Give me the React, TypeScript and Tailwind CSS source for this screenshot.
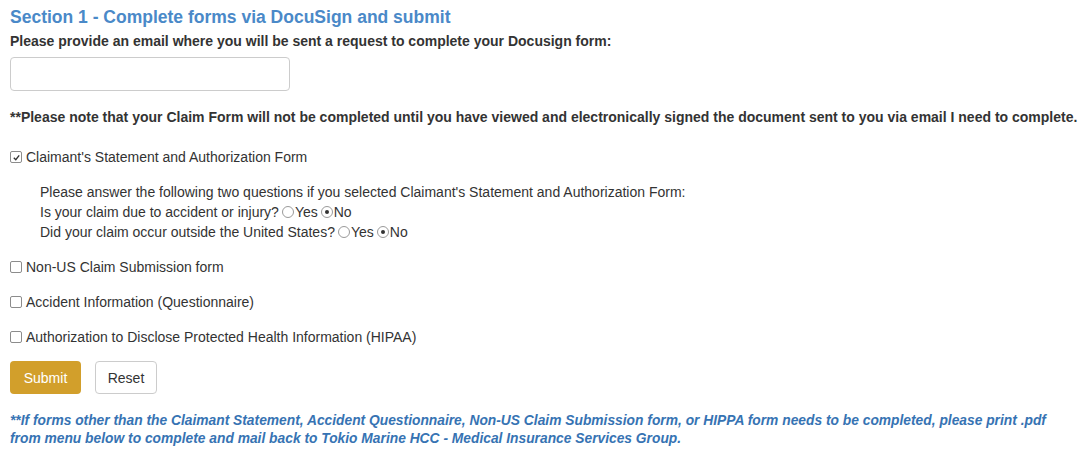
import React from 'react';

const Check: React.FC<{ checked?: boolean }> = ({ checked }) => (
  <span className="inline-flex w-[12px] h-[12px] mr-[4px] border border-[#8c8c8c] rounded-[2px] bg-white items-center justify-center shrink-0">
    {checked && (
      <svg viewBox="0 0 10 10" className="w-[9px] h-[9px]">
        <path d="M2 5.2 L4.2 7.4 L8 2.6" fill="none" stroke="#333" strokeWidth="1.5" />
      </svg>
    )}
  </span>
);

const Radio: React.FC<{ checked?: boolean }> = ({ checked }) => (
  <span className="inline-flex w-[12px] h-[12px] ml-[3px] mr-[1px] border border-[#9a9a9a] rounded-full bg-white items-center justify-center shrink-0">
    {checked && <span className="w-[4px] h-[4px] rounded-full bg-[#333]" />}
  </span>
);

const Option: React.FC<{ label: string; checked?: boolean }> = ({ label, checked }) => (
  <label className="flex items-center h-[20px]">
    <Check checked={checked} />
    <span>{label}</span>
  </label>
);

export default function App() {
  return (
    <div className="bg-white px-[10px] pt-[5px] text-[14px] leading-[20px] text-[#333] font-['Liberation_Sans',Arial,sans-serif]">
      <h2 className="text-[17.5px] leading-[24px] text-[#4a89c8] font-semibold">
        Section 1 - Complete forms via DocuSign and submit
      </h2>
      <p className="font-bold mt-[2px]">
        Please provide an email where you will be sent a request to complete your Docusign form:
      </p>
      <input
        type="text"
        className="mt-[6px] block w-[280px] h-[34px] border border-[#cccccc] rounded-[4px] px-3 outline-none"
      />
      <p className="font-bold mt-[16px] whitespace-nowrap">
        **Please note that your Claim Form will not be completed until you have viewed and electronically signed the document sent to you via email I need to complete.
      </p>
      <div className="mt-[20px]">
        <Option label="Claimant's Statement and Authorization Form" checked />
      </div>
      <div className="pl-[30px] mt-[15px]">
        <p>Please answer the following two questions if you selected Claimant's Statement and Authorization Form:</p>
        <div className="flex items-center">
          <span>Is your claim due to accident or injury?</span>
          <Radio />
          <span>Yes</span>
          <Radio checked />
          <span>No</span>
        </div>
        <div className="flex items-center">
          <span>Did your claim occur outside the United States?</span>
          <Radio />
          <span>Yes</span>
          <Radio checked />
          <span>No</span>
        </div>
      </div>
      <div className="mt-[15px] flex flex-col gap-[15px]">
        <Option label="Non-US Claim Submission form" />
        <Option label="Accident Information (Questionnaire)" />
        <Option label="Authorization to Disclose Protected Health Information (HIPAA)" />
      </div>
      <div className="mt-[14px] flex gap-[14px]">
        <button className="h-[33px] w-[71px] rounded-[4px] bg-[#d29f2b] text-white text-[14px]">Submit</button>
        <button className="h-[33px] w-[62px] rounded-[4px] bg-white border border-[#cccccc] text-[#333] text-[14px]">Reset</button>
      </div>
      <p className="mt-[18px] max-w-[1045px] font-bold italic text-[13.8px] text-[#3673b3] leading-[18px]">
        **If forms other than the Claimant Statement, Accident Questionnaire, Non-US Claim Submission form, or HIPPA form needs to be completed, please print .pdf from menu below to complete and mail back to Tokio Marine HCC - Medical Insurance Services Group.
      </p>
    </div>
  );
}
